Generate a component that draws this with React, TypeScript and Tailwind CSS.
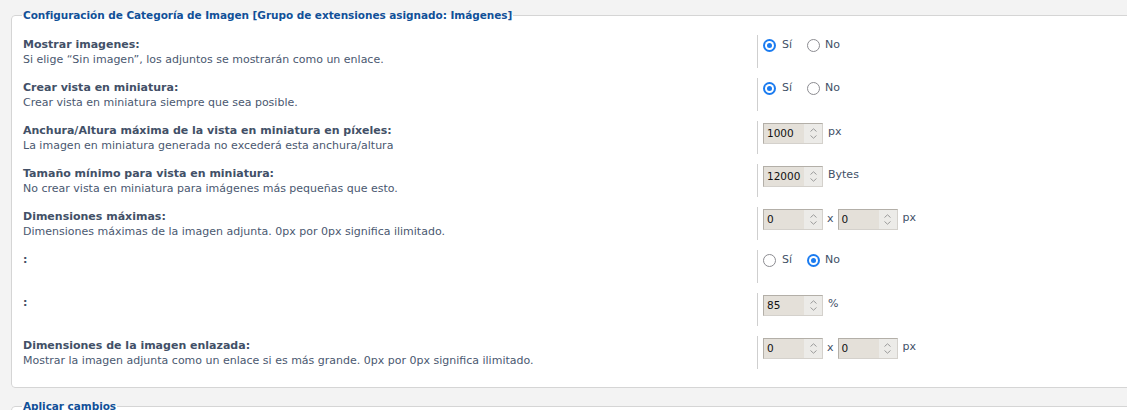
import React from "react";

const Radio = ({ checked }: { checked: boolean }) =>
  checked ? (
    <span className="flex h-[13px] w-[13px] items-center justify-center rounded-full bg-[#1a7bf0]">
      <span className="flex h-[9px] w-[9px] items-center justify-center rounded-full bg-white">
        <span className="h-[5px] w-[5px] rounded-full bg-[#1a7bf0]" />
      </span>
    </span>
  ) : (
    <span className="h-[13px] w-[13px] rounded-full border-[1.5px] border-[#8c8c91] bg-white" />
  );

const YesNo = ({ yes }: { yes: boolean }) => (
  <div className="flex h-[17px] items-center text-[11px] text-[#425067]">
    <Radio checked={yes} />
    <span className="ml-[6px] mr-[15px]">Sí</span>
    <Radio checked={!yes} />
    <span className="ml-[5px]">No</span>
  </div>
);

const NumBox = ({ value }: { value: string }) => (
  <div className="flex h-[21px] w-[60px] border border-t-[#b3afa8] border-l-[#b3afa8] border-r-[#d4d1cc] border-b-[#d4d1cc] bg-[#e4e0d9]">
    <span className="flex-1 pl-[3px] text-[10.5px] leading-[19px] text-[#111]">{value}</span>
    <span className="flex w-[18px] flex-col items-center justify-center gap-[3px] bg-[#ecebe8]">
      <svg width="7" height="4" viewBox="0 0 7 4" fill="none" stroke="#9a9a9a" strokeWidth="1">
        <path d="M0.5 3.5L3.5 0.8L6.5 3.5" />
      </svg>
      <svg width="7" height="4" viewBox="0 0 7 4" fill="none" stroke="#9a9a9a" strokeWidth="1">
        <path d="M0.5 0.5L3.5 3.2L6.5 0.5" />
      </svg>
    </span>
  </div>
);

const Unit = ({ children }: { children: React.ReactNode }) => (
  <span className="ml-[5px] -mt-[3px] text-[11px] text-[#425067]">{children}</span>
);

const Dims = () => (
  <div className="flex items-center">
    <NumBox value="0" />
    <span className="mx-[4px] text-[11px] text-[#425067]">x</span>
    <NumBox value="0" />
    <Unit>px</Unit>
  </div>
);

const rows: { title: string; desc?: string; control: React.ReactNode }[] = [
  {
    title: "Mostrar imagenes:",
    desc: "Si elige “Sin imagen”, los adjuntos se mostrarán como un enlace.",
    control: <YesNo yes />,
  },
  {
    title: "Crear vista en miniatura:",
    desc: "Crear vista en miniatura siempre que sea posible.",
    control: <YesNo yes />,
  },
  {
    title: "Anchura/Altura máxima de la vista en miniatura en píxeles:",
    desc: "La imagen en miniatura generada no excederá esta anchura/altura",
    control: (
      <div className="flex items-center">
        <NumBox value="1000" />
        <Unit>px</Unit>
      </div>
    ),
  },
  {
    title: "Tamaño mínimo para vista en miniatura:",
    desc: "No crear vista en miniatura para imágenes más pequeñas que esto.",
    control: (
      <div className="flex items-center">
        <NumBox value="12000" />
        <Unit>Bytes</Unit>
      </div>
    ),
  },
  {
    title: "Dimensiones máximas:",
    desc: "Dimensiones máximas de la imagen adjunta. 0px por 0px significa ilimitado.",
    control: <Dims />,
  },
  { title: ":", control: <YesNo yes={false} /> },
  {
    title: ":",
    control: (
      <div className="flex items-center">
        <NumBox value="85" />
        <Unit>%</Unit>
      </div>
    ),
  },
  {
    title: "Dimensiones de la imagen enlazada:",
    desc: "Mostrar la imagen adjunta como un enlace si es más grande. 0px por 0px significa ilimitado.",
    control: <Dims />,
  },
];

export default function App() {
  return (
    <div className="h-[410px] w-full overflow-hidden bg-[#f3f3f3] pl-[11px] pt-[8px] font-['DejaVu_Sans',sans-serif]">
      <fieldset className="w-[1140px] rounded-[4px] border border-[#d5d5d5] bg-white px-[10px] pb-[8px]">
        <legend className="px-px text-[10.5px] font-bold leading-[14px] tracking-[-0.05px] text-[#115098]">
          Configuración de Categoría de Imagen [Grupo de extensiones asignado: Imágenes]
        </legend>
        <div className="mt-[13px] pl-px">
          {rows.map((r, i) => (
            <div key={i} className="mb-[10px] flex">
              <div className="w-[734px] pt-[2px] text-[11px] leading-[15px]">
                <div className="font-bold text-[#425067]">{r.title}</div>
                {r.desc && <div className="text-[#4a5870]">{r.desc}</div>}
              </div>
              <div className="h-[33px] border-l border-[#cfcfcf] pl-[5px] pt-[2px]">{r.control}</div>
            </div>
          ))}
        </div>
      </fieldset>
      <fieldset className="mt-[11px] w-[1140px] rounded-[4px] border border-[#d5d5d5] bg-white px-[10px] pb-[40px]">
        <legend className="px-px text-[10.5px] font-bold leading-[14px] tracking-[-0.05px] text-[#115098]">
          Aplicar cambios
        </legend>
      </fieldset>
    </div>
  );
}
